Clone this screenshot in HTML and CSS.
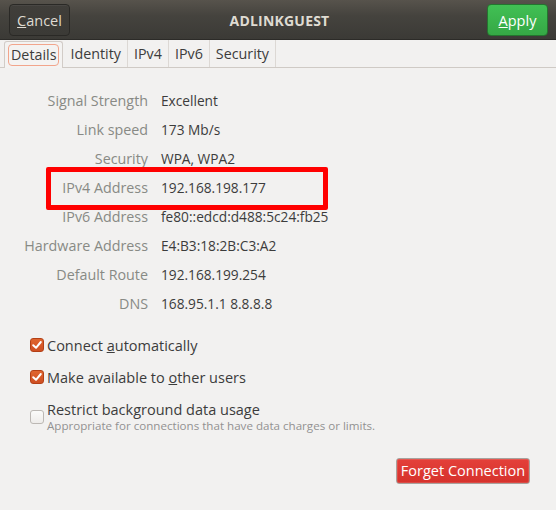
FILE: index.html
```html
<!DOCTYPE html>
<html>
<head>
<meta charset="utf-8">
<link rel="stylesheet" href="styles.css">
</head>
<body>
<div class="window">
  <header class="headerbar">
    <button class="hbtn cancel"><u>C</u>ancel</button>
    <div class="title">ADLINKGUEST</div>
    <button class="hbtn apply"><u>A</u>pply</button>
  </header>
  <nav class="tabs">
    <div class="tab active"><span class="focus">Details</span></div>
    <div class="tab">Identity</div>
    <div class="tab">IPv4</div>
    <div class="tab">IPv6</div>
    <div class="tab">Security</div>
    <div class="tab-fill"></div>
  </nav>
  <main class="content">
    <div class="info">
      <div class="label">Signal Strength</div><div class="value">Excellent</div>
      <div class="label">Link speed</div><div class="value">173 Mb/s</div>
      <div class="label">Security</div><div class="value">WPA, WPA2</div>
      <div class="label">IPv4 Address</div><div class="value">192.168.198.177</div>
      <div class="label">IPv6 Address</div><div class="value">fe80::edcd:d488:5c24:fb25</div>
      <div class="label">Hardware Address</div><div class="value">E4:B3:18:2B:C3:A2</div>
      <div class="label">Default Route</div><div class="value">192.168.199.254</div>
      <div class="label">DNS</div><div class="value">168.95.1.1 8.8.8.8</div>
    </div>
    <div class="highlight"></div>
    <div class="checks">
      <label class="check"><span class="box on"><svg viewBox="0 0 14 14" width="14" height="14"><path d="M3.2 7.2 L6 9.8 L10.8 4" fill="none" stroke="#fff" stroke-width="2" stroke-linecap="round" stroke-linejoin="round"/></svg></span><span class="ctext">Connect <u>a</u>utomatically</span></label>
      <label class="check"><span class="box on"><svg viewBox="0 0 14 14" width="14" height="14"><path d="M3.2 7.2 L6 9.8 L10.8 4" fill="none" stroke="#fff" stroke-width="2" stroke-linecap="round" stroke-linejoin="round"/></svg></span><span class="ctext">Make available to <u>o</u>ther users</span></label>
      <label class="check restrict"><span class="box"></span><span class="ctext"><span class="main">Restrict background data usage</span><span class="sub">Appropriate for connections that have data charges or limits.</span></span></label>
    </div>
    <div class="actions">
      <button class="forget">Forget Connection</button>
    </div>
  </main>
</div>
</body>
</html>
```
FILE: styles.css
```css
html, body {
  margin: 0;
  padding: 0;
  background: #f2f1f0;
}
body {
  font-family: "Open Sans", "DejaVu Sans", sans-serif;
  font-size: 14px;
  color: #3c3c3c;
  width: 556px;
  height: 510px;
  overflow: hidden;
}
.window {
  position: relative;
  width: 556px;
  height: 510px;
}
.headerbar {
  height: 40px;
  box-sizing: border-box;
  display: flex;
  align-items: center;
  justify-content: space-between;
  padding: 0 8px 0 9px;
  background: linear-gradient(#57534c, #45433e 40%, #3b3a36);
  border-bottom: 1px solid #2c2b28;
}
.hbtn {
  height: 32px;
  width: 61px;
  border-radius: 4px;
  font-family: inherit;
  font-size: 14.5px;
  padding: 2px 0 0;
  box-sizing: border-box;
}
.cancel {
  background: linear-gradient(#403e3a, #3b3a36);
  border: 1px solid #2a2926;
  color: #dfdbd2;
  box-shadow: inset 0 1px rgba(255,255,255,0.05);
}
.apply {
  background: linear-gradient(#41c054, #35a845);
  border: 1px solid #24752f;
  color: #ffffff;
}
.title {
  font-weight: bold;
  font-size: 14px;
  color: #dfdbd2;
  letter-spacing: 0.2px;
  margin-left: 2px;
  padding-top: 2px;
}
.tabs {
  display: flex;
  height: 28px;
  box-sizing: border-box;
  border-bottom: 1px solid #cfcac5;
  padding-left: 4px;
  background: #f2f1f0;
}
.tab {
  display: flex;
  align-items: center;
  padding: 0 6px;
  height: 27px;
  box-sizing: border-box;
  border-right: 1px solid #dcd8d4;
  color: #3c3c3c;
  font-size: 14.3px;
}
.tab.active {
  padding: 0 3px;
  border: 1px solid #d2ccc7;
  border-bottom: none;
  border-radius: 3px 3px 0 0;
  background: #f4f3f2;
  margin-top: 1px;
  margin-right: 1px;
  height: 27px;
}
.focus {
  border: 1px solid #f2a58c;
  border-radius: 4px;
  padding: 0 2px;
  line-height: 20px;
}
.tab-fill {
  flex: 1;
}
.content {
  padding-top: 18px;
}
.info {
  display: grid;
  grid-template-columns: 148px auto;
  column-gap: 13px;
  grid-auto-rows: 29px;
  line-height: 29px;
  font-size: 14px;
}
.label {
  text-align: right;
  color: #888a85;
  white-space: nowrap;
  font-size: 14.3px;
}
.value {
  color: #3c3c3c;
  white-space: nowrap;
  font-size: 13.7px;
}
.highlight {
  position: absolute;
  left: 46px;
  top: 167px;
  width: 282px;
  height: 43px;
  box-sizing: border-box;
  border: 5px solid #ff0000;
  border-radius: 2px;
}
.checks {
  padding: 11px 0 0 30px;
  display: flex;
  flex-direction: column;
}
.check {
  display: flex;
  align-items: center;
  height: 32px;
  font-size: 14.5px;
}
.box {
  width: 14px;
  height: 14px;
  box-sizing: border-box;
  border: 1px solid #bcb8b4;
  border-radius: 3px;
  background: linear-gradient(#fbfbfa, #eeecea);
  margin-right: 3px;
  display: flex;
  flex-shrink: 0;
}
.box.on {
  background: linear-gradient(#e0652f, #cf4f22);
  border: 1px solid #b34016;
}
.box svg {
  margin: -1px;
}
.restrict {
  align-items: flex-start;
  height: auto;
  padding-top: 9px;
}
.restrict .box {
  margin-top: 8px;
}
.restrict .ctext {
  display: flex;
  flex-direction: column;
}
.main {
  line-height: 16px;
}
.sub {
  font-size: 11.6px;
  color: #929292;
  line-height: 15px;
  white-space: nowrap;
}
.actions {
  display: flex;
  justify-content: flex-end;
  padding: 25px 26px 0 0;
}
.forget {
  height: 26px;
  width: 134px;
  border-radius: 3px;
  border: 1px solid #a8a29d;
  background: linear-gradient(#e4403a, #d6322c);
  color: #ffffff;
  font-family: inherit;
  font-size: 14.5px;
  padding: 0 0 1px;
  box-shadow: inset 0 0 0 1px rgba(255,255,255,0.12);
}
```
